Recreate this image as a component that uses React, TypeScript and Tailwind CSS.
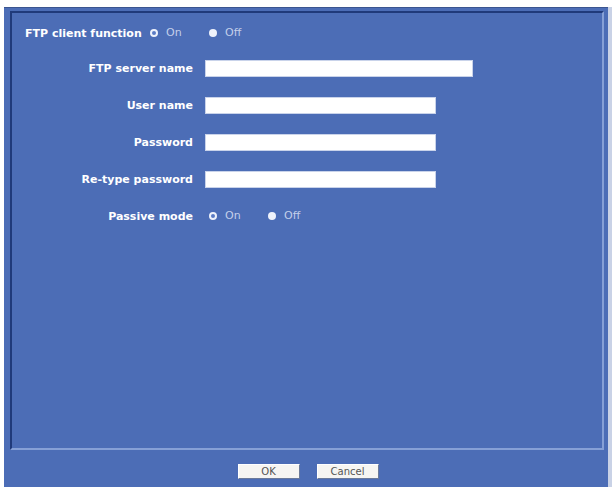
const labelCls =
  "w-[193px] shrink-0 pr-[12px] text-right text-[11px] font-bold text-white leading-none";

const buttonCls =
  "h-[15px] w-[62px] border border-b-[#6b7a99] border-l-white border-r-[#6b7a99] border-t-white bg-[#f6f5f2] text-[10px] leading-none text-[#555]";

function Radio({ checked }: { checked?: boolean }) {
  return checked ? (
    <span className="inline-block h-[8px] w-[8px] rounded-full border-[2px] border-[#eef2fb] bg-[#5a7bc4]" />
  ) : (
    <span className="inline-block h-[8px] w-[8px] rounded-full bg-[#eef2fb]" />
  );
}

function OnOff() {
  return (
    <div className="flex items-center text-[11px] text-[#c3cfea]">
      <Radio checked />
      <span className="ml-[8px] w-[43px]">On</span>
      <Radio />
      <span className="ml-[8px]">Off</span>
    </div>
  );
}

function Field({ label, width }: { label: string; width: string }) {
  return (
    <div className="flex h-[17px] items-center">
      <span className={labelCls}>{label}</span>
      <div className={`h-[17px] ${width} border border-[#c9d3ea] bg-white`} />
    </div>
  );
}

export default function App() {
  return (
    <div
      className="flex h-[487px] w-[612px] bg-white pl-[4px] pt-[7px]"
      style={{ fontFamily: '"DejaVu Sans", Verdana, sans-serif' }}
    >
      <div className="flex flex-1 flex-col border-t border-[#3b5590] bg-[#4c6db6]">
        {/* settings panel */}
        <div className="ml-[6px] mr-[4px] mt-[3px] h-[439px] border-[2px] border-b-[#86a0d6] border-l-[#203a7a] border-r-[#86a0d6] border-t-[#203a7a]">
          <div className="flex flex-col gap-[20px] pt-[11px]">
            <div className="-mb-[2px] flex h-[18px] items-center pl-[13px]">
              <span className="w-[125px] text-[11px] font-bold leading-none text-white">
                FTP client function
              </span>
              <OnOff />
            </div>
            <Field label="FTP server name" width="w-[268px]" />
            <Field label="User name" width="w-[231px]" />
            <Field label="Password" width="w-[231px]" />
            <Field label="Re-type password" width="w-[231px]" />
            <div className="flex h-[16px] items-center">
              <span className={labelCls}>Passive mode</span>
              <div className="pl-[4px]">
                <OnOff />
              </div>
            </div>
          </div>
        </div>

        {/* dialog buttons */}
        <div className="mt-[14px] flex justify-center gap-[17px] pl-[4px]">
          <button className={buttonCls}>OK</button>
          <button className={buttonCls}>Cancel</button>
        </div>
      </div>
      <div className="w-[4px] bg-[#c9d2e6]" />
    </div>
  );
}
